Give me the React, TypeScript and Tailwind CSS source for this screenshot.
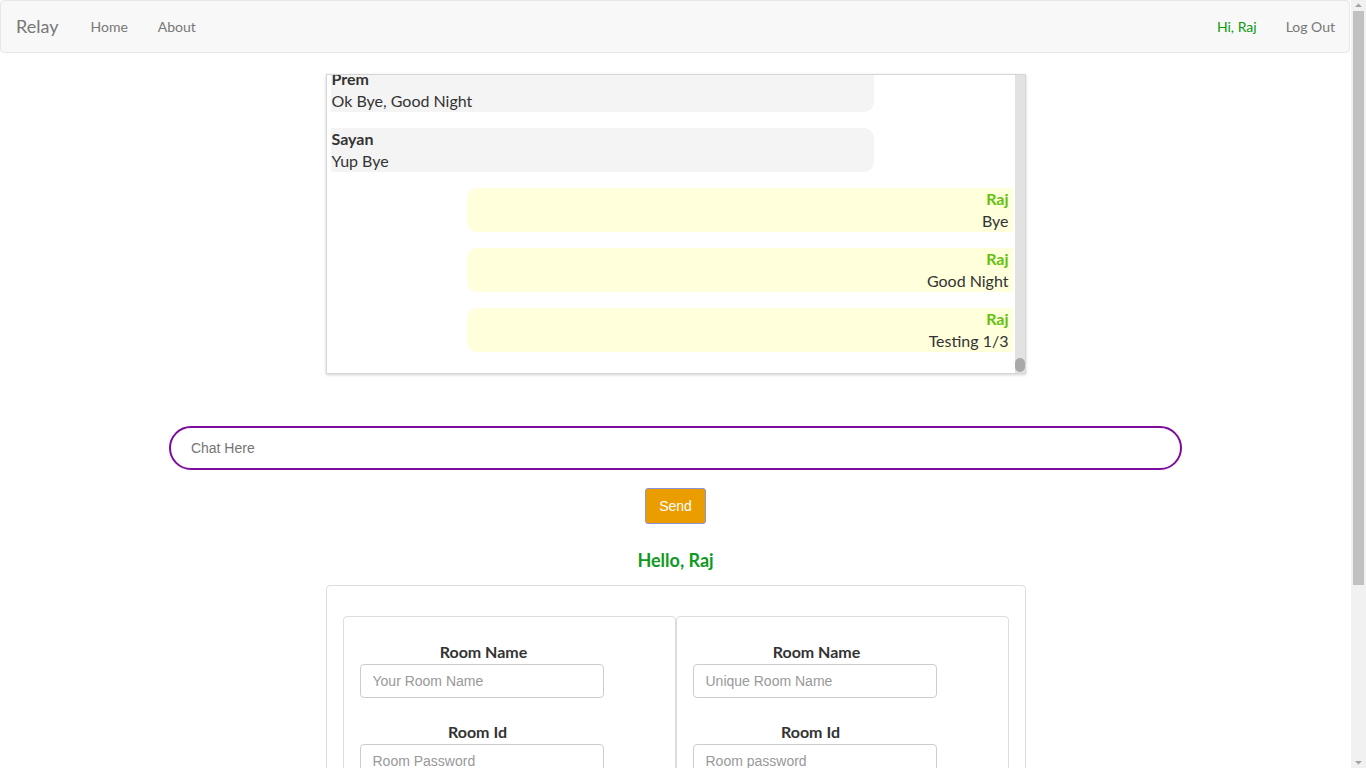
import type { ReactNode } from "react";

type Msg = { from: string; text: string };

// only the tail of the conversation is on screen; the list sits at the bottom
const messages: Msg[] = [
  { from: "Prem", text: "Ok Bye, Good Night" },
  { from: "Sayan", text: "Yup Bye" },
  { from: "Raj", text: "Bye" },
  { from: "Raj", text: "Good Night" },
  { from: "Raj", text: "Testing 1/3" },
];

const me = "Raj";

function Navbar() {
  return (
    <nav className="mb-[21px] flex h-[53px] w-[1350px] items-center justify-between rounded-[4px] border border-[#e7e7e7] bg-[#f8f8f8]">
      <div className="flex items-center">
        <a href="#" className="pl-[15px] pr-[17px] text-[18px] text-[#777]">
          Relay
        </a>
        <a href="#" className="px-[15px] text-[14px] text-[#777]">
          Home
        </a>
        <a href="#" className="px-[15px] text-[14px] text-[#777]">
          About
        </a>
      </div>
      <div className="flex items-center">
        <a href="#" className="pl-[15px] pr-[14px] text-[14px] text-[#0a9a0a]">
          Hi, Raj
        </a>
        <a href="#" className="pl-[15px] pr-[14px] text-[14px] text-[#777]">
          Log Out
        </a>
      </div>
    </nav>
  );
}

function Bubble({ m }: { m: Msg }) {
  const mine = m.from === me;
  if (mine) {
    return (
      <div className="mb-4 ml-auto w-[546px] shrink-0 rounded-l-[10px] bg-[#ffffdc] pr-[4px] text-right leading-[22px]">
        <div className="font-bold text-[#66c010]">{m.from}</div>
        <div>{m.text}</div>
      </div>
    );
  }
  return (
    <div className="mb-4 w-[543px] shrink-0 rounded-r-[10px] bg-[#f4f4f4] pl-[1px] leading-[22px]">
      <div className="font-bold">{m.from}</div>
      <div>{m.text}</div>
    </div>
  );
}

function ChatBox() {
  return (
    <div className="mx-auto flex h-[300px] w-[700px] border border-[#d6d6d6] shadow-[0_1px_3px_rgba(0,0,0,0.18)]">
      <div className="flex flex-1 flex-col justify-end overflow-hidden pb-[5px] pl-[4px] pr-[2px] text-[16px]">
        {messages.map((m, i) => (
          <Bubble key={i} m={m} />
        ))}
      </div>
      {/* scroll track, thumb parked at the bottom */}
      <div className="flex w-[10px] flex-col justify-end bg-[#e2e2e2]">
        <div className="mb-[1px] h-[14px] rounded-full bg-[#a9a9a9]" />
      </div>
    </div>
  );
}

function Field({
  label,
  placeholder,
  labelW,
}: {
  label: string;
  placeholder: string;
  labelW: string;
}) {
  return (
    <div className="mb-[24px]">
      <div className={`${labelW} mb-[2px] text-center text-[16px] font-bold leading-[20px]`}>
        {label}
      </div>
      <input
        placeholder={placeholder}
        className="h-[34px] w-[244px] rounded-[4px] border border-[#ccc] px-[12px] font-['Liberation_Sans',Arial,sans-serif] text-[14px] outline-none placeholder:text-[#999]"
      />
    </div>
  );
}

function RoomPanel({
  namePh,
  idPh,
  action,
}: {
  namePh: string;
  idPh: string;
  action: string;
}) {
  return (
    <div className="flex-1 rounded-[4px] border border-[#ddd] px-4 pb-[26px] pt-[25px]">
      <Field label="Room Name" placeholder={namePh} labelW="w-[248px]" />
      <Field label="Room Id" placeholder={idPh} labelW="w-[236px]" />
      <button className="rounded-[4px] border border-[#2e6da4] bg-[#337ab7] px-[12px] py-[6px] font-['Liberation_Sans',Arial,sans-serif] text-[14px] text-white">
        {action}
      </button>
    </div>
  );
}

function PageScrollbar() {
  // the browser's own page scrollbar, drawn since the shot hides it
  return (
    <div className="fixed right-0 top-0 flex h-screen w-[15px] flex-col items-center bg-[#f1f1f1]">
      <Arrow up />
      <div className="mx-auto mt-[1px] h-[574px] w-[11px] bg-[#c1c1c1]" />
      <div className="flex-1" />
      <Arrow />
    </div>
  );
}

function Arrow({ up }: { up?: boolean }): ReactNode {
  return (
    <svg width="15" height="10" viewBox="0 0 15 10" className="shrink-0">
      <path d={up ? "M4 7 L7.5 3.5 L11 7 Z" : "M4 3 L7.5 6.5 L11 3 Z"} fill="#a3a3a3" />
    </svg>
  );
}

export default function App() {
  return (
    <div className="flex bg-white font-['Lato','Open_Sans',sans-serif] text-[#333]">
      <main className="min-h-[988px] w-[1351px] shrink-0 pb-[80px]">
        <Navbar />
        <ChatBox />

        <div className="mt-[52px] flex flex-col items-center">
          <input
            placeholder="Chat Here"
            className="h-[44px] w-3/4 rounded-full border-2 border-[#7e0a9e] px-[20px] font-['Liberation_Sans',Arial,sans-serif] text-[14px] outline-none placeholder:text-[#757575]"
          />
          <button className="mt-[18px] h-[36px] w-[61px] rounded-[3px] border border-[#8c93d8] bg-[#eb9d00] font-['Liberation_Sans',Arial,sans-serif] text-[14px] text-white">
            Send
          </button>
          <h3 className="mt-[24px] text-[18px] font-bold leading-[24px] text-[#0f9a1e]">
            Hello, Raj
          </h3>
        </div>

        <div className="mx-auto mt-[13px] w-[700px] rounded-[4px] border border-[#ddd] px-4 pb-[30px] pt-[30px]">
          <div className="flex">
            <RoomPanel namePh="Your Room Name" idPh="Room Password" action="Join Room" />
            <RoomPanel namePh="Unique Room Name" idPh="Room password" action="Create Room" />
          </div>
        </div>
      </main>
      <PageScrollbar />
    </div>
  );
}
